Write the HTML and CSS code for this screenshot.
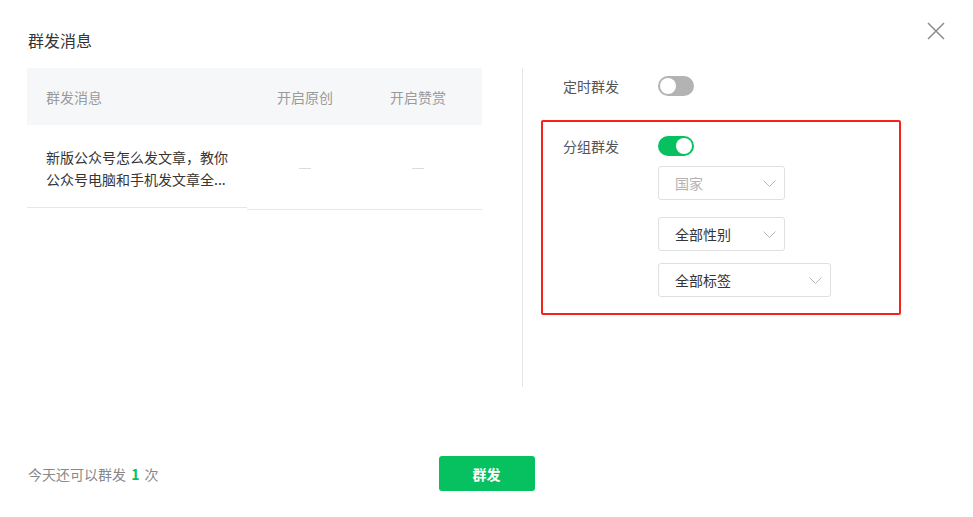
FILE: index.html
```html
<!DOCTYPE html>
<html lang="zh-CN">

<head>
    <meta charset="UTF-8">
    <meta name="viewport" content="width=device-width, initial-scale=1.0">
    <title>群发消息</title>
    <link rel="stylesheet" href="styles.css">
</head>

<body>
    <div class="dialog">
        <h2 class="title">群发消息</h2>
        <button class="close" aria-label="关闭">
            <svg width="18" height="18" viewBox="0 0 18 18">
                <path d="M1 1L17 17M17 1L1 17" stroke="#8a8a8a" stroke-width="1.5" fill="none" />
            </svg>
        </button>

        <div class="main">
            <div class="table">
                <div class="thead">
                    <div class="col col-msg">群发消息</div>
                    <div class="col col-orig">开启原创</div>
                    <div class="col col-reward">开启赞赏</div>
                </div>
                <div class="trow">
                    <div class="cell cell-msg">新版公众号怎么发文章，教你公众号电脑和手机发文章全...</div>
                    <div class="cell col-orig"><span class="dash"></span></div>
                    <div class="cell col-reward"><span class="dash"></span></div>
                </div>
            </div>

            <div class="side">
                <div class="opt opt-timer">
                    <span class="label">定时群发</span>
                    <span class="switch"></span>
                </div>

                <div class="group-box">
                    <div class="opt">
                        <span class="label">分组群发</span>
                        <span class="switch on"></span>
                    </div>
                    <div class="selects">
                        <div class="select placeholder sel-country">
                            <span>国家</span>
                            <svg width="13" height="7" viewBox="0 0 13 7"><path d="M0.5 0.5L6.5 6.5L12.5 0.5" stroke="#b8b8b8" fill="none" /></svg>
                        </div>
                        <div class="select sel-gender">
                            <span>全部性别</span>
                            <svg width="13" height="7" viewBox="0 0 13 7"><path d="M0.5 0.5L6.5 6.5L12.5 0.5" stroke="#b8b8b8" fill="none" /></svg>
                        </div>
                        <div class="select wide sel-tag">
                            <span>全部标签</span>
                            <svg width="13" height="7" viewBox="0 0 13 7"><path d="M0.5 0.5L6.5 6.5L12.5 0.5" stroke="#b8b8b8" fill="none" /></svg>
                        </div>
                    </div>
                </div>
            </div>
        </div>

        <div class="footer">
            <div class="quota">今天还可以群发 <em>1</em> 次</div>
            <button class="btn-send">群发</button>
            <div></div>
        </div>
    </div>
</body>

</html>
```

FILE: styles.css
```css
body {
    margin: 0;
    background: #fff;
    font-family: "Noto Sans CJK SC", "Noto Sans", sans-serif;
    color: #353535;
}

.dialog {
    position: relative;
    width: 973px;
    height: 517px;
    padding-top: 30px;
    box-sizing: border-box;
}

.title {
    margin: 0 0 0 28px;
    font-size: 16px;
    font-weight: normal;
    line-height: 20px;
    color: #353535;
}

.close {
    position: absolute;
    left: 927px;
    top: 22px;
    width: 18px;
    height: 18px;
    padding: 0;
    border: 0;
    background: none;
    cursor: pointer;
}

.close svg {
    display: block;
}

.main {
    display: flex;
    margin-top: 18px;
}

/* message table */
.table {
    width: 455px;
    margin-left: 27px;
    font-size: 14px;
}

.thead {
    display: flex;
    height: 57px;
    align-items: center;
    background-color: #f6f7f9;
    color: #9a9a9a;
}

.col-msg {
    width: 220px;
    padding-left: 19px;
    box-sizing: border-box;
}

.col-orig {
    width: 116px;
    text-align: center;
}

.col-reward {
    width: 119px;
    padding-right: 9px;
    box-sizing: border-box;
    text-align: center;
}

.trow {
    display: flex;
    align-items: flex-start;
}

.cell {
    flex-shrink: 0;
    height: 85px;
    border-bottom: 1px solid #e7e7e7;
    display: flex;
    align-items: center;
    justify-content: center;
    box-sizing: border-box;
}

.cell-msg {
    display: block;
    width: 220px;
    height: 83px;
    padding: 21px 12px 0 19px;
    overflow: hidden;
    line-height: 22px;
    color: #353535;
}

.dash {
    display: block;
    width: 12px;
    height: 1px;
    margin-top: 2px;
    background-color: #dcdcdc;
}

/* options on the right */
.side {
    height: 319px;
    margin-left: 40px;
    padding-left: 18px;
    border-left: 1px solid #e6e6e6;
}

.opt {
    display: flex;
    align-items: center;
    height: 20px;
    font-size: 14px;
}

.opt-timer {
    margin-top: 8px;
    padding-left: 22px;
}

.label {
    width: 95px;
    color: #555;
    line-height: 20px;
}

.switch {
    position: relative;
    width: 36px;
    height: 20px;
    border-radius: 10px;
    background-color: #b3b3b3;
}

.switch::after {
    content: "";
    position: absolute;
    top: 2px;
    left: 2px;
    width: 16px;
    height: 16px;
    border-radius: 50%;
    background-color: #fff;
}

.switch.on {
    background-color: #07c160;
}

.switch.on::after {
    left: 18px;
}

.group-box {
    width: 360px;
    margin-top: 24px;
    padding: 14px 20px 16px;
    box-sizing: border-box;
    border: 2px solid #f5231b;
    border-radius: 2px;
}

.selects {
    margin-left: 95px;
}

.select {
    display: flex;
    align-items: center;
    justify-content: space-between;
    width: 127px;
    height: 34px;
    padding: 0 8px 0 16px;
    box-sizing: border-box;
    border: 1px solid #e0e0e0;
    border-radius: 3px;
    font-size: 14px;
    color: #353535;
}

.select.placeholder {
    color: #b2b2b2;
}

.select.wide {
    width: 173px;
}

.sel-country {
    margin-top: 10px;
}

.sel-gender {
    margin-top: 17px;
}

.sel-tag {
    margin-top: 12px;
}

/* footer */
.footer {
    display: grid;
    grid-template-columns: 1fr auto 1fr;
    align-items: center;
    margin-top: 69px;
    padding: 0 28px;
}

.quota {
    font-size: 14px;
    color: #888;
}

.quota em {
    font-style: normal;
    font-weight: bold;
    color: #07c160;
    margin: 0 2px;
}

.btn-send {
    width: 96px;
    height: 35px;
    border: 0;
    border-radius: 3px;
    background-color: #07c160;
    color: #fff;
    font-family: inherit;
    font-size: 14px;
    font-weight: bold;
    cursor: pointer;
}
```
